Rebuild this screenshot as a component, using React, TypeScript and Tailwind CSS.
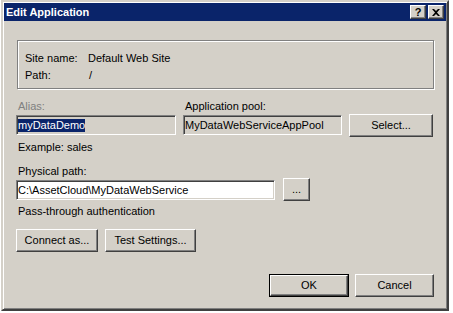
import React from "react";

const font = { fontFamily: '"Liberation Sans", Arial, sans-serif' };

function Btn({ w, children, def }: { w: string; children: React.ReactNode; def?: boolean }) {
  const inner = (
    <div className="flex h-full w-full items-center justify-center border-t border-l border-t-white border-l-white border-b border-r border-b-[#404040] border-r-[#404040] shadow-[inset_-1px_-1px_0_#808080] bg-[#d4d0c8] text-[11px] leading-[13px] text-black">
      {children}
    </div>
  );
  if (def) {
    return <div className={`${w} h-[23px] border border-black`}>{inner}</div>;
  }
  return <div className={`${w} h-[23px]`}>{inner}</div>;
}

function Field({ w, bg, children }: { w: string; bg: string; children: React.ReactNode }) {
  return (
    <div
      className={`${w} h-[20px] ${bg} border-t border-l border-t-[#808080] border-l-[#808080] border-b border-r border-b-white border-r-white shadow-[inset_1px_1px_0_#404040,inset_-1px_-1px_0_#d4d0c8] flex items-center pl-[1px] text-[11px] leading-[13px] text-black whitespace-nowrap overflow-hidden`}
    >
      {children}
    </div>
  );
}

function TitleBtn({ children }: { children: React.ReactNode }) {
  return (
    <div className="w-[16px] h-[14px] bg-[#d4d0c8] border-t border-l border-t-white border-l-white border-b border-r border-b-[#404040] border-r-[#404040] shadow-[inset_-1px_-1px_0_#808080] flex items-center justify-center">
      {children}
    </div>
  );
}

export default function App() {
  return (
    <div className="w-[453px] h-[313px] bg-white overflow-hidden" style={font}>
      <div className="ml-[1px] w-[448px] h-[311px] bg-[#d4d0c8] border-2 border-t-[#d4d0c8] border-l-[#d4d0c8] border-b-[#404040] border-r-[#404040] shadow-[inset_1px_1px_0_#fff,inset_-1px_-1px_0_#808080] p-[1px] flex flex-col">
        {/* Title bar */}
        <div className="h-[18px] bg-[#0a246a] flex items-center pl-[2px] pr-[2px]">
          <span className="text-white font-bold text-[11px] leading-[13px] flex-1">Edit Application</span>
          <div className="flex gap-[2px]">
            <TitleBtn>
              <span className="text-black font-bold text-[11px] leading-[11px]">?</span>
            </TitleBtn>
            <TitleBtn>
              <svg width="8" height="7" viewBox="0 0 8 7">
                <path d="M0 0h2l2 2 2-2h2L5 3.5 8 7H6L4 5 2 7H0l3-3.5z" fill="#000" />
              </svg>
            </TitleBtn>
          </div>
        </div>

        {/* Content */}
        <div className="flex flex-col pl-[12px] pr-[12px]">
          {/* Group box */}
          <div className="mt-[19px] ml-[1px] h-[49px] border border-[#808080] shadow-[inset_1px_1px_0_#fff,1px_1px_0_#fff] pt-[9px] pl-[7px] text-[11px] text-black">
            <div className="flex leading-[17px]">
              <span className="w-[63px]">Site name:</span>
              <span>Default Web Site</span>
            </div>
            <div className="flex leading-[17px]">
              <span className="w-[63px]">Path:</span>
              <span className="pl-[1px]">/</span>
            </div>
          </div>

          {/* Alias / App pool row */}
          <div className="flex mt-[11px]">
            <div className="flex flex-col w-[160px]">
              <span className="pl-[2px] text-[11px] leading-[13px] text-[#808080]">Alias:</span>
              <div className="mt-[2px]">
                <Field w="w-[160px]" bg="bg-[#d4d0c8]">
                  <span className="bg-[#0a246a] text-white">myDataDemo</span>
                </Field>
              </div>
            </div>
            <div className="flex flex-col w-[159px] ml-[7px]">
              <span className="pl-[2px] text-[11px] leading-[13px] text-black">Application pool:</span>
              <div className="mt-[2px]">
                <Field w="w-[159px]" bg="bg-[#d4d0c8]">
                  <span>MyDataWebServiceAppPool</span>
                </Field>
              </div>
            </div>
            <div className="ml-[7px] pt-[14px]">
              <Btn w="w-[84px]">Select...</Btn>
            </div>
          </div>

          <span className="mt-[4px] pl-[2px] text-[11px] leading-[13px] text-black">Example: sales</span>

          <span className="mt-[11px] pl-[2px] text-[11px] leading-[13px] text-black">Physical path:</span>
          <div className="flex items-start">
            <div className="mt-[2px]">
              <Field w="w-[259px]" bg="bg-white">
                <span>C:\AssetCloud\MyDataWebService</span>
              </Field>
            </div>
            <div className="ml-[8px]">
              <Btn w="w-[27px]">...</Btn>
            </div>
          </div>

          <span className="mt-[4px] pl-[2px] text-[11px] leading-[13px] text-black">Pass-through authentication</span>

          <div className="flex gap-[7px] mt-[11px]">
            <Btn w="w-[82px]">Connect as...</Btn>
            <Btn w="w-[91px]">Test Settings...</Btn>
          </div>

          <div className="flex justify-end gap-[6px] mt-[22px]">
            <Btn w="w-[80px]" def>
              OK
            </Btn>
            <Btn w="w-[79px]">Cancel</Btn>
          </div>
        </div>
      </div>
    </div>
  );
}
